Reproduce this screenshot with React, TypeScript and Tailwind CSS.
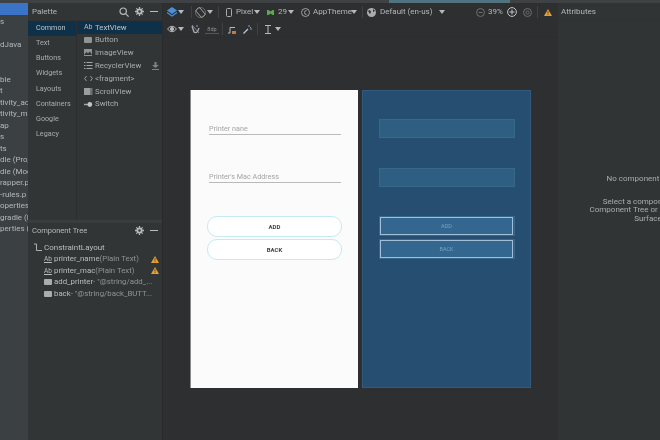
import React from "react";

function Caret({ className = "" }: { className?: string }) {
  return (
    <svg width="6" height="4" viewBox="0 0 6 4" className={"shrink-0 " + className}>
      <path d="M0 0h6L3 4z" fill="#b5b9bb" />
    </svg>
  );
}

function Sep({ className = "" }: { className?: string }) {
  return <div className={"w-px h-[12px] bg-[#404345] shrink-0 " + className} />;
}

function Search() {
  return (
    <svg width="10" height="10" viewBox="0 0 10 10" fill="none" stroke="#b9bdbf" strokeWidth="1.2">
      <circle cx="4.2" cy="4.2" r="3.2" />
      <path d="M6.6 6.6l3 3" />
    </svg>
  );
}

function Gear() {
  return (
    <svg width="9" height="9" viewBox="0 0 10 10" fill="none" stroke="#b9bdbf">
      <circle cx="5" cy="5" r="2.4" strokeWidth="2" />
      <path d="M5 0v2M5 8v2M0 5h2M8 5h2M1.5 1.5l1.4 1.4M7.1 7.1l1.4 1.4M8.5 1.5L7.1 2.9M2.9 7.1L1.5 8.5" strokeWidth="1.4" />
    </svg>
  );
}

function Minus() {
  return <div className="w-[8px] h-px bg-[#b9bdbf]" />;
}

function Warn() {
  return (
    <svg width="8" height="7" viewBox="0 0 8 7" className="shrink-0">
      <path d="M4 0l4 7H0z" fill="#e5a033" />
      <path d="M4 2.2v2.4M4 5.3v.8" stroke="#3a3020" strokeWidth=".8" />
    </svg>
  );
}

function BtnIcon() {
  return <div className="w-[8px] h-[6px] rounded-[1px] bg-[#a9adaf] shrink-0" />;
}

function PaletteIcon({ kind }: { kind: string }) {
  if (kind === "ab") return <span className="text-[7px] w-[9px] text-[#b9bdbf] leading-none">Ab</span>;
  if (kind === "btn") return <div className="w-[8px] h-[6px] rounded-[1px] bg-[#8f9395] mr-px" />;
  if (kind === "img")
    return (
      <svg width="9" height="7" viewBox="0 0 9 7">
        <rect width="8" height="7" fill="#8f9395" />
        <path d="M0 6l2.5-3 1.5 1.5L6 2.5 8 6z" fill="#2e3132" />
      </svg>
    );
  if (kind === "list")
    return (
      <svg width="9" height="7" viewBox="0 0 9 7" fill="#a3a7a9">
        <rect y="0" width="1.5" height="1" />
        <rect y="3" width="1.5" height="1" />
        <rect y="6" width="1.5" height="1" />
        <rect x="2.5" y="0" width="6" height="1" />
        <rect x="2.5" y="3" width="6" height="1" />
        <rect x="2.5" y="6" width="6" height="1" />
      </svg>
    );
  if (kind === "code")
    return (
      <svg width="9" height="7" viewBox="0 0 9 7" fill="none" stroke="#a3a7a9" strokeWidth=".9">
        <path d="M2.5 1L.7 3.5 2.5 6M6.5 1l1.8 2.5L6.5 6" />
      </svg>
    );
  if (kind === "scroll")
    return (
      <svg width="9" height="7" viewBox="0 0 9 7">
        <rect width="8.5" height="7" fill="#6f7375" />
        <rect width="6" height="7" fill="#9a9ea0" />
      </svg>
    );
  return (
    <svg width="9" height="7" viewBox="0 0 9 7">
      <rect y="2.8" width="5" height="1.4" fill="#a3a7a9" />
      <circle cx="5.8" cy="3.5" r="2.4" fill="#c0c4c6" />
    </svg>
  );
}

const files = ["s", "", "dJava", "", "", "ble", "t", "tivity_ad", "tivity_ma", "ap", "s", "ts", "dle (Proj", "dle (Moc", "rapper.p", "-rules.p", "operties", "gradle (P", "perties ("];
const cats = ["Common", "Text", "Buttons", "Widgets", "Layouts", "Containers", "Google", "Legacy"];
const items: [string, string][] = [
  ["ab", "TextView"],
  ["btn", "Button"],
  ["img", "ImageView"],
  ["list", "RecyclerView"],
  ["code", "<fragment>"],
  ["scroll", "ScrollView"],
  ["sw", "Switch"],
];

function Field({ label }: { label: string }) {
  return (
    <div className="ml-[18px] mr-[17px] h-[11px] border-b border-[#b9b9b9] text-[7.2px] leading-[9px] text-[#a4a4a4]">
      {label}
    </div>
  );
}

function WhiteButton({ label }: { label: string }) {
  return (
    <div className="mx-[16px] h-[21px] rounded-[10px] border border-[#c6e9f1] bg-white flex items-center justify-center text-[6px] font-bold text-[#444]">
      {label}
    </div>
  );
}

function BlueField() {
  return <div className="ml-[16px] mr-[15px] h-[19px] bg-[#2e5e82] border border-[#386889]" />;
}

function BlueButton({ label }: { label: string }) {
  return (
    <div className="ml-[16px] mr-[15px] h-[20px] border border-[#386889] bg-[#2e5e82]">
      <div className="mr-px h-[18px] border border-[#a3bed8] bg-[#336790] flex items-center justify-center text-[5.5px] text-[#7fa0bb]">
        {label}
      </div>
    </div>
  );
}

function TreeRow({ icon, text, warn }: { icon: "ab" | "btn"; text: React.ReactNode; warn?: boolean }) {
  return (
    <div className="h-[11.5px] pl-[16px] pr-[3px] flex items-center text-[7.8px] text-[#b9bdbf] whitespace-nowrap">
      <div className="w-[10px] shrink-0 flex items-center">
        {icon === "ab" ? <span className="text-[6.5px] underline leading-none">Ab</span> : <BtnIcon />}
      </div>
      <span className="flex-1 overflow-hidden">{text}</span>
      {warn && <Warn />}
    </div>
  );
}

export default function App() {
  return (
    <div className="w-[660px] h-[440px] overflow-hidden flex flex-col bg-[#2e2f30] text-[#b4b8ba] blur-[0.4px] font-['Roboto',sans-serif]">
      <div className="h-[3px] shrink-0 flex bg-[#3e4244]">
        <div className="w-[389px]" />
        <div className="w-[121px] bg-[#51727f]" />
      </div>
      <div className="flex flex-1 min-h-0">
        {/* project sidebar */}
        <div className="w-[28px] shrink-0 bg-[#3b4043] overflow-hidden">
          <div className="h-[12px] bg-[#3b74c6]" />
          {files.map((f, i) => (
            <div key={i} className="h-[11.5px] leading-[11.5px] text-[8px] whitespace-nowrap text-[#b4b8ba] relative top-[1px]">
              {f}
            </div>
          ))}
        </div>

        {/* palette + tree */}
        <div className="w-[134px] shrink-0 bg-[#323536] flex flex-col">
          <div className="h-[18px] flex items-center pl-[4px] pr-[4px] border-b border-[#2f3132]">
            <span className="text-[8px] flex-1">Palette</span>
            <Search />
            <span className="ml-[6px]"><Gear /></span>
            <span className="ml-[6px]"><Minus /></span>
          </div>
          <div className="h-[199px] flex">
            <div className="w-[49px] shrink-0 border-r border-[#2b2d2e]">
              {cats.map((c, i) => (
                <div
                  key={c}
                  className={
                    "h-[15.1px] pl-[8px] flex items-center text-[7.2px] " +
                    (i === 0 ? "bg-[#0f3049] text-[#c0c4c6]" : "text-[#a9adaf]")
                  }
                >
                  {c}
                </div>
              ))}
            </div>
            <div className="flex-1">
              {items.map(([k, t], i) => (
                <div
                  key={t}
                  className={
                    "h-[12.8px] pl-[7px] pr-[3px] flex items-center gap-[1px] text-[7.8px] " +
                    (i === 0 ? "bg-[#0f3049] text-[#c0c4c6]" : "text-[#a9adaf]")
                  }
                >
                  <span className="w-[10px] flex items-center"><PaletteIcon kind={k} /></span>
                  <span className="flex-1">{t}</span>
                  {k === "list" && (
                    <svg width="7" height="8" viewBox="0 0 7 8" fill="#7f8385">
                      <path d="M2.5 0h2v3H7L3.5 6 0 3h2.5z" />
                      <rect y="7" width="7" height="1" />
                    </svg>
                  )}
                </div>
              ))}
            </div>
          </div>
          <div className="h-[3px] bg-[#3a3d3f]" />
          <div className="h-[15px] flex items-center pl-[4px] pr-[4px]">
            <span className="text-[7.5px] flex-1">Component Tree</span>
            <Gear />
            <span className="ml-[6px]"><Minus /></span>
          </div>
          <div className="pt-[4px]">
            <div className="h-[11.5px] pl-[5px] flex items-center text-[8px] text-[#b9bdbf]">
              <svg width="10" height="9" viewBox="0 0 10 9" fill="none" stroke="#b9bdbf" strokeWidth=".9" className="mr-[1px]">
                <path d="M1 1h2.5v6.5H9" />
              </svg>
              ConstraintLayout
            </div>
            <TreeRow icon="ab" text={<>printer_name<span className="text-[#8f9395]">(Plain Text)</span></>} warn />
            <TreeRow icon="ab" text={<>printer_mac<span className="text-[#8f9395]">(Plain Text)</span></>} warn />
            <TreeRow icon="btn" text={<>add_printer<span className="text-[#8f9395]">- "@string/add_...</span></>} />
            <TreeRow icon="btn" text={<>back<span className="text-[#8f9395]">- "@string/back_BUTT...</span></>} />
          </div>
        </div>

        {/* design surface */}
        <div className="w-[396px] shrink-0 flex flex-col border-l border-[#2a2b2c]">
          <div className="h-[18px] flex items-center pl-[4px] text-[8px] whitespace-nowrap">
            <svg width="10" height="10" viewBox="0 0 10 10">
              <path d="M5 0l5 3.5L5 7 0 3.500z" fill="#4a90d9" />
              <path d="M0 5.500L5 9l5-3.500" fill="none" stroke="#4a90d9" strokeWidth="1.2" />
            </svg>
            <Caret className="ml-[1px]" />
            <Sep className="ml-[7px]" />
            <svg width="11" height="11" viewBox="0 0 11 11" fill="none" stroke="#a3a7a9" strokeWidth=".9" className="ml-[3px]">
              <rect x="3" y="0.8" width="5" height="9.4" rx="1" transform="rotate(-40 5.500 5.500)" />
              <circle cx="5.500" cy="5.500" r="5" strokeWidth=".5" />
            </svg>
            <Caret className="ml-[1px]" />
            <Sep className="ml-[5px]" />
            <svg width="6" height="9" viewBox="0 0 6 9" fill="none" stroke="#a9adaf" className="ml-[7px]">
              <rect x=".5" y=".5" width="5" height="8" rx="1" />
            </svg>
            <span className="ml-[4px] w-[17px]">Pixel</span>
            <Caret className="ml-[1px]" />
            <svg width="7" height="5" viewBox="0 0 7 5" className="ml-[7px]">
              <path d="M0 0h7v5H0z" fill="#5fa84e" />
              <path d="M1.500 0L3.500 1.500 5.500 0M1.500 5L3.500 3.500 5.500 5" fill="#2e2f30" />
            </svg>
            <span className="ml-[4px] w-[9px]">29</span>
            <Caret className="ml-[1px]" />
            <svg width="9" height="9" viewBox="0 0 9 9" fill="none" stroke="#a9adaf" strokeWidth=".9" className="ml-[7px]">
              <circle cx="4.500" cy="4.500" r="4" />
              <path d="M5.500 2.500a2 2 0 100 4" />
            </svg>
            <span className="ml-[3px] w-[37px]">AppTheme</span>
            <Caret className="ml-[1px]" />
            <Sep className="ml-[5px]" />
            <svg width="9" height="9" viewBox="0 0 9 9" className="ml-[4px]">
              <circle cx="4.500" cy="4.500" r="4.500" fill="#a9adaf" />
              <path d="M1 3l2-1 1 2-1 2zM6 1l2 2-2 1z" fill="#2e2f30" />
            </svg>
            <span className="ml-[4px] w-[54px]">Default (en-us)</span>
            <Caret className="ml-[5px]" />
            <svg width="9" height="9" viewBox="0 0 9 9" fill="none" stroke="#6c7072" className="ml-[31px]">
              <circle cx="4.500" cy="4.500" r="4" />
              <path d="M2.500 4.500h4" />
            </svg>
            <span className="ml-[3px] w-[15px]">39%</span>
            <svg width="10" height="10" viewBox="0 0 10 10" fill="none" stroke="#c4c8ca" className="ml-[4px]">
              <circle cx="5" cy="5" r="4.400" />
              <path d="M2.500 5h5M5 2.500v5" />
            </svg>
            <svg width="9" height="9" viewBox="0 0 9 9" fill="none" stroke="#6c7072" className="ml-[6px]">
              <circle cx="4.500" cy="4.500" r="4" />
              <circle cx="4.500" cy="4.500" r="1.600" />
            </svg>
            <Sep className="ml-[5px]" />
            <span className="ml-[6px]"><Warn /></span>
          </div>
          <div className="h-[17px] flex items-center pl-[4px] text-[6px] border-b border-[#2c2d2e]">
            <svg width="10" height="8" viewBox="0 0 10 8" fill="none" stroke="#b5b9bb">
              <path d="M.5 4Q5-1.500 9.500 4 5 9.500.5 4z" />
              <circle cx="5" cy="4" r="1.600" fill="#b5b9bb" />
            </svg>
            <Caret className="ml-[1px]" />
            <svg width="9" height="9" viewBox="0 0 9 9" fill="none" className="ml-[7px]">
              <path d="M1 1l2 6a2.500 2.500 0 004 -1.500L8 3" stroke="#a9adaf" strokeWidth="1.300" />
              <path d="M6 0v2" stroke="#4a90d9" strokeWidth="1.300" />
              <path d="M1 0l7 8" stroke="#a9adaf" strokeWidth=".7" />
            </svg>
            <span className="ml-[5px] w-[14px] text-center text-[5.5px] text-[#8f9395] border-b border-[#55585a] leading-[8px]">8dp</span>
            <Sep className="ml-[3px]" />
            <svg width="9" height="9" viewBox="0 0 9 9" fill="none" className="ml-[5px]">
              <path d="M0 8h2V2.500h5" stroke="#b5b9bb" />
              <rect x="4" y="6" width="4" height="3" fill="#c07a45" />
            </svg>
            <svg width="9" height="9" viewBox="0 0 9 9" fill="none" className="ml-[6px]">
              <path d="M0.500 8.500L5 4" stroke="#c4c8ca" strokeWidth="1.300" />
              <path d="M6 0v2M8 2L7 3M9 4H7" stroke="#6fa8dc" />
            </svg>
            <Sep className="ml-[5px]" />
            <svg width="8" height="9" viewBox="0 0 8 9" fill="none" stroke="#b5b9bb" className="ml-[6px]">
              <path d="M1 .5h6M1 8.500h6M4 .5v8" />
            </svg>
            <Caret className="ml-[3px]" />
          </div>
          <div className="flex-1 pl-[27px] pt-[52px] flex gap-[4px] items-start">
            <div className="w-[168px] h-[298px] bg-[#fbfbfb] border-l border-[#8a8a8a] pt-[34px] flex flex-col">
              <Field label="Printer nane" />
              <div className="h-[37px]" />
              <Field label="Printer's Mac Address" />
              <div className="h-[33px]" />
              <WhiteButton label="ADD" />
              <div className="h-[2px]" />
              <WhiteButton label="BACK" />
            </div>
            <div className="w-[169px] h-[298px] bg-[#254e70] border border-[#33597c] pt-[28px] flex flex-col">
              <BlueField />
              <div className="h-[30px]" />
              <BlueField />
              <div className="h-[29px]" />
              <BlueButton label="ADD" />
              <div className="h-[3px]" />
              <BlueButton label="BACK" />
            </div>
          </div>
        </div>

        {/* attributes */}
        <div className="flex-1 min-w-0 bg-[#313435] overflow-hidden">
          <div className="h-[18px] flex items-center pl-[3px] text-[8px] border-b border-[#2f3132]">Attributes</div>
          <div className="w-[182px] pt-[154px] text-center text-[8px] leading-[8.5px] text-[#a9adaf] whitespace-nowrap">
            <div>No component selected</div>
            <div className="h-[14px]" />
            <div>Select a component in the</div>
            <div>Component Tree or on the Design</div>
            <div>Surface.</div>
          </div>
        </div>
      </div>
    </div>
  );
}
